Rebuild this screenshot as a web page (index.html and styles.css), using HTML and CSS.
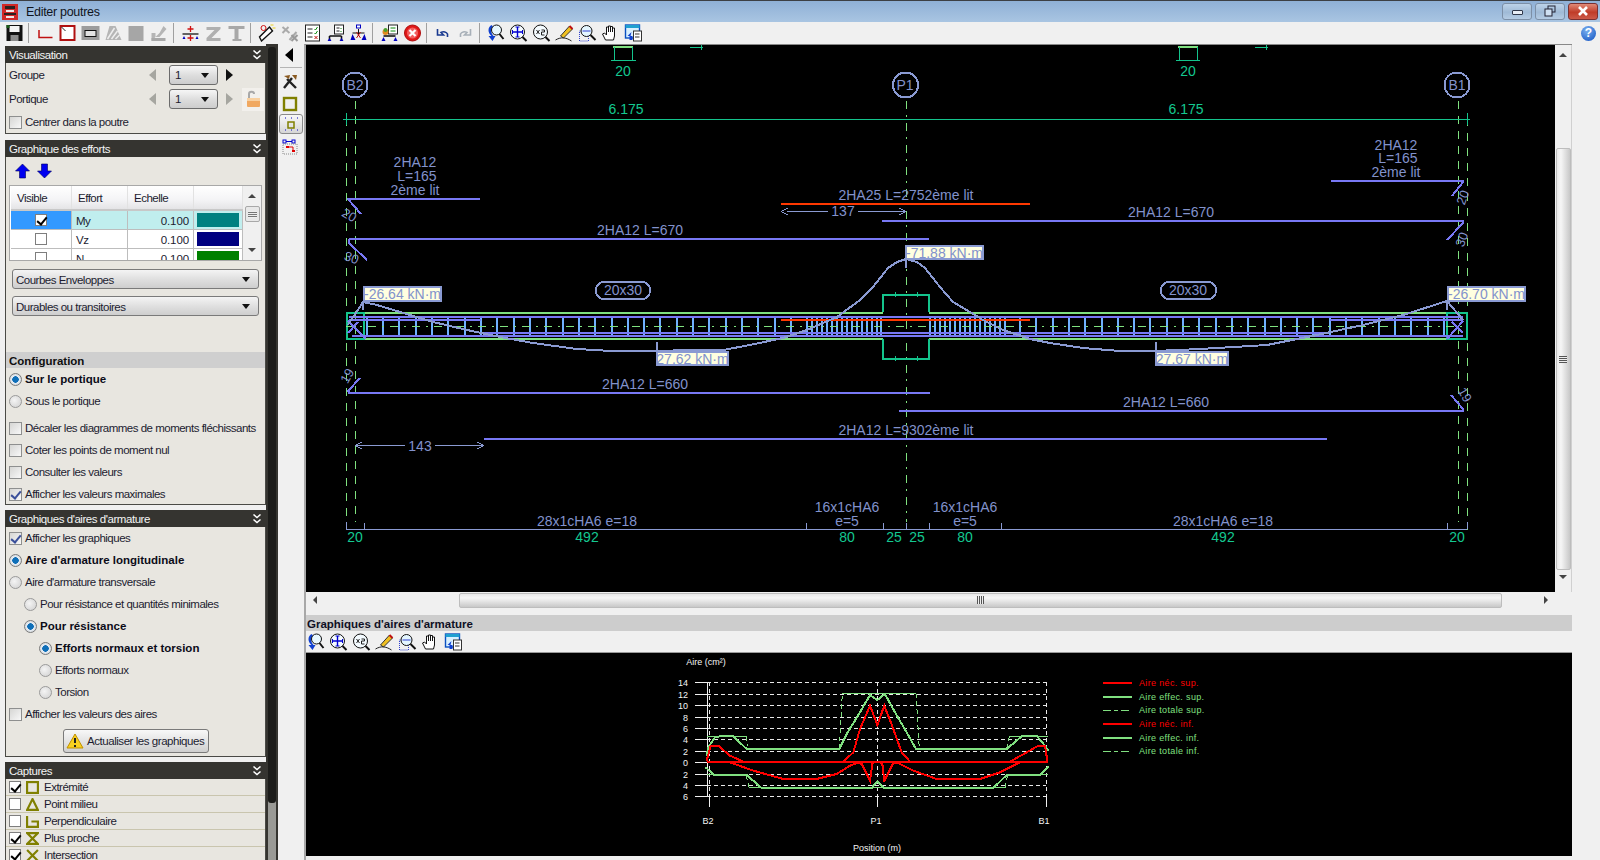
FILE: index.html
```html
<!DOCTYPE html>
<html lang="fr">
<head>
<meta charset="utf-8">
<title>Editer poutres</title>
<link rel="stylesheet" href="styles.css">
</head>
<body>
<svg class="defs" width="0" height="0" aria-hidden="true">
  <symbol id="i-save" viewBox="0 0 18 18"><rect x="1" y="1" width="16" height="16" fill="#111"/><rect x="4" y="2" width="10" height="6" fill="#f4f4f4"/><rect x="5" y="11" width="8" height="6" fill="#8a8a8a"/><rect x="1" y="1" width="3" height="3" fill="#1a5c1a"/></symbol>
  <symbol id="i-l" viewBox="0 0 18 18"><path d="M3.5 6V13.5H17" fill="none" stroke="#c01010" stroke-width="1.5"/></symbol>
  <symbol id="i-box" viewBox="0 0 18 18"><rect x="2" y="2" width="14" height="14" fill="#fff" stroke="#b01010" stroke-width="2"/><path d="M3 3L7 7" stroke="#222"/></symbol>
  <symbol id="i-rect" viewBox="0 0 18 18"><rect x="0" y="2" width="18" height="14" fill="#9c9c9c"/><rect x="3.5" y="6.5" width="11" height="6" fill="#e2e2e2" stroke="#111"/></symbol>
  <symbol id="i-hatch" viewBox="0 0 18 18"><path d="M1 16L5 2H11L17 16Z" fill="#b5b5b5"/><path d="M3 15L10 4M7 15L13 7M11 15L15 11" stroke="#eee" stroke-width="1.5"/></symbol>
  <symbol id="i-sq" viewBox="0 0 18 18"><rect x="1" y="2" width="15" height="15" fill="#a6a6a6"/></symbol>
  <symbol id="i-hat" viewBox="0 0 18 18"><path d="M1 17V9H5V13H9L16 5L13 2L9 9" fill="#b5b5b5"/><rect x="1" y="14" width="14" height="3" fill="#a8a8a8"/></symbol>
  <symbol id="i-beam" viewBox="0 0 18 18"><path d="M1 10H17" stroke="#333" stroke-width="1.5"/><path d="M1 15H4L2.5 12ZM14 15H17L15.500 12Z" fill="#0000c0"/><path d="M9 2V8M6 5H12M9 11V17M6 14H12" stroke="#d01010" stroke-width="1.3"/></symbol>
  <symbol id="i-z" viewBox="0 0 18 18"><path d="M2 3H16V5L7 14H16V17H2V14L10 6H2Z" fill="#b0b0b0"/></symbol>
  <symbol id="i-t" viewBox="0 0 18 18"><path d="M1 2H17V5H11V15H14V17H5V15H7V5H1Z" fill="#a8a8a8"/></symbol>
  <symbol id="i-wand" viewBox="0 0 18 18"><path d="M4 17L2 13L12 3L15 7Z" fill="#fff" stroke="#111" stroke-width="1.4"/><circle cx="6" cy="4" r="2.500" fill="none" stroke="#d01010"/><path d="M13 1H16M15 4H18" stroke="#e8d020"/></symbol>
  <symbol id="i-x" viewBox="0 0 18 18"><path d="M2 3L9 9M8 3L2 9M9 16L16 8" stroke="#aaa" stroke-width="2"/><path d="M11 11L17 17M17 11L11 17" stroke="#9a9a9a" stroke-width="2"/></symbol>
  <symbol id="i-list" viewBox="0 0 18 18"><rect x="2" y="1" width="14" height="16" fill="#fff" stroke="#222"/><path d="M4 5H9M4 9H9M4 13H9" stroke="#222"/><path d="M11 5L12 6L14 3M11 9L12 10L14 7" fill="none" stroke="#0a8a0a"/><path d="M11 12L14 15M14 12L11 15" stroke="#c01010"/></symbol>
  <symbol id="i-table" viewBox="0 0 18 18"><rect x="8" y="1" width="9" height="9" fill="#fff" stroke="#222"/><path d="M10 4H13M10 7H13" stroke="#222"/><path d="M14 4L15 5M14 7L15 8" stroke="#0a8a0a"/><path d="M3 12H15M3 12V16M15 12V16" stroke="#111" stroke-width="1.600"/><path d="M1 17H5L3 14ZM13 17H17L15 14Z" fill="#0000c0"/></symbol>
  <symbol id="i-node" viewBox="0 0 18 18"><path d="M3 9H15M9 5V12" stroke="#111"/><path d="M1 16H6L3 10ZM12 16H17L15 10Z" fill="#0000c0"/><rect x="7" y="1" width="4" height="3" fill="#fff" stroke="#0000c0"/><path d="M7 8L11 14M11 8L7 14" stroke="#c01010"/></symbol>
  <symbol id="i-shop" viewBox="0 0 18 18"><rect x="8" y="1" width="9" height="9" fill="#fff" stroke="#222"/><path d="M10 4H15M10 7H15" stroke="#0a8a0a"/><path d="M3 12H15" stroke="#111" stroke-width="1.600"/><path d="M1 17H5L3 13ZM13 17H17L15 13Z" fill="#0000c0"/><circle cx="5" cy="8" r="3" fill="#e08a20"/><circle cx="5" cy="6" r="2" fill="#4aa030"/></symbol>
  <symbol id="i-stop" viewBox="0 0 18 18"><circle cx="9" cy="9" r="8" fill="#e01818" stroke="#b01010"/><circle cx="9" cy="9" r="5.500" fill="#f26060"/><path d="M6 6L12 12M12 6L6 12" stroke="#fff" stroke-width="2.200"/></symbol>
  <symbol id="i-undo" viewBox="0 0 18 18"><path d="M4 5V11H10L7.500 8.500C10 7 13 8 14 10L14 13" fill="none" stroke="#1a3a90" stroke-width="1.600"/></symbol>
  <symbol id="i-redo" viewBox="0 0 18 18"><path d="M14 5V11H8L10.500 8.500C8 7 5 8 4 10L4 13" fill="none" stroke="#a8b0b8" stroke-width="1.600"/></symbol>
  <symbol id="i-zr" viewBox="0 0 18 18"><path d="M5 1C1 3 1 9 5 12L2 12L6 17L9 12H7C4 9 4 5 7 3" fill="#1040d0"/><circle cx="10" cy="6" r="5" fill="#e8f8ff" stroke="#111"/><path d="M13 10L17 15" stroke="#111" stroke-width="2"/></symbol>
  <symbol id="i-zf" viewBox="0 0 18 18"><circle cx="8" cy="8" r="7" fill="#f4fbff" stroke="#111"/><path d="M8 3V13M3 8H13" stroke="#0000d0" stroke-width="1.400"/><path d="M6 3H10M6 13H10M3 6V10M13 6V10" stroke="#0000d0"/><path d="M13 13L17 17" stroke="#111" stroke-width="2"/></symbol>
  <symbol id="i-z2" viewBox="0 0 18 18"><circle cx="8" cy="8" r="7" fill="#f4fbff" stroke="#111"/><path d="M4 6L7 10M7 6L4 10" stroke="#222"/><path d="M9 6H12V8H9V11H12" fill="none" stroke="#222"/><path d="M13 13L17 17" stroke="#111" stroke-width="2"/></symbol>
  <symbol id="i-pen" viewBox="0 0 18 18"><path d="M5 12L14 2L17 5L8 14Z" fill="#f0c020" stroke="#333"/><path d="M14 2L17 5" stroke="#c01010" stroke-width="2"/><path d="M0 16C5 13 10 13 16 17" fill="none" stroke="#222"/></symbol>
  <symbol id="i-zw" viewBox="0 0 18 18"><rect x="1" y="7" width="9" height="10" fill="none" stroke="#3040d0" stroke-dasharray="1 1"/><circle cx="8" cy="7" r="5.500" fill="#e4f6ff" stroke="#111"/><path d="M4 7H12" stroke="#3040d0"/><path d="M12 11L17 16" stroke="#111" stroke-width="2"/></symbol>
  <symbol id="i-hand" viewBox="0 0 18 18"><path d="M4 16L1 10L3 9L5 11V3H7V8V2H9V8V2.500H11V8V4H13V12L12 16Z" fill="#fff" stroke="#111"/></symbol>
  <symbol id="i-doc" viewBox="0 0 18 18"><rect x="1" y="1" width="14" height="13" fill="#d8f0ff" stroke="#0a50c0" stroke-width="1.400"/><rect x="1" y="1" width="14" height="3" fill="#20a0d0"/><rect x="9" y="7" width="8" height="10" fill="#fff" stroke="#333"/><path d="M10.500 10H15M10.500 13H15" stroke="#333"/><path d="M7 8L3 12H5V16H8V12H6" fill="#1040d0"/></symbol>
  <symbol id="i-chev" viewBox="0 0 10 10"><path d="M1.500 0.500L5 3.500L8.500 0.500M1.500 5.500L5 8.500L8.500 5.500" fill="none" stroke="#fff" stroke-width="1.500"/></symbol>
</svg>

<div class="app">
  <header class="titlebar">
    <svg class="appicon" viewBox="0 0 16 16"><rect width="16" height="16" fill="#d02828"/><path d="M3 2H13V5H3ZM2 9H14V11H2Z" fill="#2a2020"/><path d="M4 6H12V8H4ZM4 12H12V14H4Z" fill="#f0e8e8"/></svg>
    <span class="titletext">Editer poutres</span>
    <div class="winbtns">
      <span class="winbtn"><span class="wmin"></span></span>
      <span class="winbtn"><svg class="wrest" viewBox="0 0 12 12"><rect x="4" y="1" width="7" height="6" fill="none" stroke="#223"/><rect x="1" y="4" width="7" height="7" fill="#cfe0f2" stroke="#223"/></svg></span>
      <span class="winbtn wclose"><svg class="wrest" viewBox="0 0 12 12"><path d="M2 2L10 10M10 2L2 10" stroke="#fff" stroke-width="2.600"/></svg></span>
    </div>
  </header>

  <nav class="toolbar">
    <svg class="tb"><use href="#i-save"/></svg><i class="sep"></i>
    <svg class="tb"><use href="#i-l"/></svg><svg class="tb"><use href="#i-box"/></svg><svg class="tb"><use href="#i-rect"/></svg><svg class="tb"><use href="#i-hatch"/></svg><svg class="tb"><use href="#i-sq"/></svg><svg class="tb"><use href="#i-hat"/></svg><i class="sep"></i>
    <svg class="tb"><use href="#i-beam"/></svg><svg class="tb"><use href="#i-z"/></svg><svg class="tb"><use href="#i-t"/></svg><i class="sep"></i>
    <svg class="tb"><use href="#i-wand"/></svg><svg class="tb"><use href="#i-x"/></svg><svg class="tb"><use href="#i-list"/></svg><svg class="tb"><use href="#i-table"/></svg><svg class="tb"><use href="#i-node"/></svg><i class="sep"></i>
    <svg class="tb"><use href="#i-shop"/></svg><svg class="tb"><use href="#i-stop"/></svg><i class="sep"></i>
    <svg class="tb"><use href="#i-undo"/></svg><svg class="tb"><use href="#i-redo"/></svg><i class="sep"></i>
    <svg class="tb"><use href="#i-zr"/></svg><svg class="tb"><use href="#i-zf"/></svg><svg class="tb"><use href="#i-z2"/></svg><svg class="tb"><use href="#i-pen"/></svg><svg class="tb"><use href="#i-zw"/></svg><svg class="tb"><use href="#i-hand"/></svg><svg class="tb"><use href="#i-doc"/></svg>
  </nav>

  <div class="main">
    <aside class="side">
      <section class="panel">
        <h2 class="phead">Visualisation<svg class="chev"><use href="#i-chev"/></svg></h2>
        <div class="pbody p1">
          <div class="vrow"><span>Groupe</span><i class="arr-l"></i><span class="select">1</span><i class="arr-r"></i></div>
          <div class="vrow"><span>Portique</span><i class="arr-l"></i><span class="select">1</span><i class="arr-r off"></i>
            <span class="lock"><svg viewBox="0 0 18 18" width="18" height="18"><path d="M5 8V4C5 1 10 1 10 4" fill="none" stroke="#a8a8a8" stroke-width="2"/><rect x="3" y="8" width="13" height="9" rx="1" fill="#f0a860"/><rect x="3" y="8" width="13" height="3" fill="#f8d0a0"/></svg></span></div>
          <div class="opt"><i class="cb"></i>Centrer dans la poutre</div>
        </div>
      </section>

      <section class="panel">
        <h2 class="phead">Graphique des efforts<svg class="chev"><use href="#i-chev"/></svg></h2>
        <div class="pbody p2">
          <div class="updown">
            <svg viewBox="0 0 14 16" width="15" height="16"><path d="M7 1L14 8H10V15H4V8H0Z" fill="#0000f0" stroke="#000060" stroke-width=".6"/></svg>
            <svg viewBox="0 0 14 16" width="15" height="16"><path d="M7 15L14 8H10V1H4V8H0Z" fill="#0000f0" stroke="#000060" stroke-width=".6"/></svg>
          </div>
          <div class="grid">
            <div class="gridmain">
              <div class="gr ghead"><span>Visible</span><span>Effort</span><span>Echelle</span><span></span></div>
              <div class="gr gsel"><span class="cvis"><i class="cbw on"></i></span><span>My</span><span class="num">0.100</span><span class="cswatch"><i class="sw s-teal"></i></span></div>
              <div class="gr"><span class="cvis"><i class="cbw"></i></span><span>Vz</span><span class="num">0.100</span><span class="cswatch"><i class="sw s-navy"></i></span></div>
              <div class="gr"><span class="cvis"><i class="cbw"></i></span><span>N</span><span class="num">0.100</span><span class="cswatch"><i class="sw s-green"></i></span></div>
            </div>
            <div class="gridscroll"><i class="up"></i><i class="gthumb"></i><i class="down"></i></div>
          </div>
          <div class="combo">Courbes Enveloppes</div>
          <div class="combo">Durables ou transitoires</div>
          <h3 class="cfg">Configuration</h3>
          <div class="opt"><i class="rb on"></i><b>Sur le portique</b></div>
          <div class="opt"><i class="rb"></i>Sous le portique</div>
          <div class="opt gaptop"><i class="cb"></i>Décaler les diagrammes de moments fléchissants</div>
          <div class="opt"><i class="cb"></i>Coter les points de moment nul</div>
          <div class="opt"><i class="cb"></i>Consulter les valeurs</div>
          <div class="opt"><i class="cb on"></i>Afficher les valeurs maximales</div>
        </div>
      </section>

      <section class="panel">
        <h2 class="phead">Graphiques d'aires d'armature<svg class="chev"><use href="#i-chev"/></svg></h2>
        <div class="pbody p3">
          <div class="opt"><i class="cb on"></i>Afficher les graphiques</div>
          <div class="opt"><i class="rb on"></i><b>Aire d'armature longitudinale</b></div>
          <div class="opt"><i class="rb"></i>Aire d'armature transversale</div>
          <div class="opt in1"><i class="rb"></i>Pour résistance et quantités minimales</div>
          <div class="opt in1"><i class="rb on"></i><b>Pour résistance</b></div>
          <div class="opt in2"><i class="rb on"></i><b>Efforts normaux et torsion</b></div>
          <div class="opt in2"><i class="rb"></i>Efforts normaux</div>
          <div class="opt in2"><i class="rb"></i>Torsion</div>
          <div class="opt"><i class="cb"></i>Afficher les valeurs des aires</div>
          <button class="action"><svg viewBox="0 0 18 16" width="18" height="16"><path d="M9 1L17 15H1Z" fill="#f8d020" stroke="#c09000"/><path d="M9 5V10M9 12V14" stroke="#222" stroke-width="2"/></svg>Actualiser les graphiques</button>
        </div>
      </section>

      <section class="panel captures">
        <h2 class="phead">Captures<svg class="chev"><use href="#i-chev"/></svg></h2>
        <div class="pbody p4">
          <div class="cap"><i class="cbw on"></i><svg class="capi" viewBox="0 0 12 12"><rect x="1" y="1" width="10" height="10"/></svg>Extrémité</div>
          <div class="cap"><i class="cbw"></i><svg class="capi" viewBox="0 0 12 12"><path d="M6 1L11 11H1Z"/></svg>Point milieu</div>
          <div class="cap"><i class="cbw"></i><svg class="capi" viewBox="0 0 12 12"><path d="M1 1V11H11V6H5"/></svg>Perpendiculaire</div>
          <div class="cap"><i class="cbw on"></i><svg class="capi" viewBox="0 0 12 12"><path d="M1 1H11L1 11H11Z"/></svg>Plus proche</div>
          <div class="cap"><i class="cbw on"></i><svg class="capi" viewBox="0 0 12 12"><path d="M1 1L11 11M11 1L1 11"/></svg>Intersection</div>
        </div>
      </section>
    </aside>

    <div class="siderail"><i class="railthumb"></i></div>

    <div class="strip">
      <i class="stripcollapse"></i>
      <i class="stripsep"></i>
      <svg class="si" viewBox="0 0 18 18"><path d="M3 15L11 5M15 15L6 6" stroke="#222" stroke-width="2.400"/><path d="M3 3L9 2L8 6ZM11 2H16L15 7Z" fill="#8a5a20"/></svg>
      <svg class="si" viewBox="0 0 18 18"><rect x="3" y="3" width="12" height="12" fill="none" stroke="#808000" stroke-width="2.400"/></svg>
      <span class="sisel"><svg viewBox="0 0 18 18" width="18" height="18"><path d="M3 3H4M9 3H10M15 3H16M3 15H4M15 15H16M9 15H10" stroke="#0000c0"/><rect x="6" y="7" width="6" height="6" fill="none" stroke="#808000" stroke-width="1.500"/></svg></span>
      <svg class="si" viewBox="0 0 18 18"><rect x="2" y="2" width="3" height="3" fill="none" stroke="#0000d0"/><path d="M5 3.500H11" stroke="#0000d0"/><rect x="11" y="2" width="3" height="3" fill="none" stroke="#0000d0"/><rect x="2" y="6" width="14" height="10" fill="none" stroke="#888" stroke-dasharray="1 1"/><rect x="5" y="8" width="3" height="2" fill="#e00000"/><rect x="11" y="12" width="3" height="2" fill="#e00000"/><path d="M8 9H12V12" fill="none" stroke="#e00000"/></svg>
    </div>

    <div class="center">
      <div class="viewrow">
        <svg class="canvas" width="1249" height="547" viewBox="306 45 1249 547">
          <!-- axes -->
          <path class="axis" d="M355 101V522M1458 101V522"/>
          <path class="axis" d="M346.500 118V530M1467.500 118V530"/>
          <path class="axis2" d="M906 101V522"/>
          <!-- top dimensions -->
          <path class="barg" d="M613 46.500H633M1178 46.500H1198"/>
          <path class="teal" d="M614.500 47V60M632.500 47V60M611 60.500H636M1179.500 47V60M1197.500 47V60M1176 60.500H1200M690 47.500H703M701.500 45V50M1255 47.500H1268M1266.500 45V50"/>
          <text class="dim" x="623" y="76">20</text><text class="dim" x="1188" y="76">20</text>
          <path class="teal" d="M343 119.500H1470M346.500 113V125M1467.500 113V125"/>
          <text class="dim" x="626" y="114">6.175</text><text class="dim" x="1186" y="114">6.175</text>
          <!-- circles -->
          <circle class="bub" cx="355" cy="85" r="12.500"/><circle class="bub" cx="905.500" cy="85" r="12.500"/><circle class="bub" cx="1457" cy="85" r="12.500"/>
          <text class="lbl" x="355" y="90">B2</text><text class="lbl" x="905" y="90">P1</text><text class="lbl" x="1457" y="90">B1</text>
          <!-- top rebars -->
          <text class="lbl" x="415" y="167">2HA12</text><text class="lbl" x="417" y="181">L=165</text><text class="lbl" x="415" y="195">2ème lit</text>
          <path class="rebar" d="M361 214L348 199L349 198.500H480"/>
          <text class="lbl" x="640" y="235">2HA12 L=670</text>
          <path class="rebar" d="M367 260L349 243V240L351 238.500H929"/>
          <text class="lbl" x="906" y="200">2HA25 L=2752ème lit</text>
          <path class="redbar" d="M781 203.500H1030"/>
          <path class="thin" d="M787 211.500H828M858 211.500H905M781 211.500L788 208M781 211.500L788 215M906 211.500L899 208M906 211.500L899 215"/>
          <text class="lbl" x="843" y="216">137</text>
          <path class="rebar" d="M882 220.500H1463V223L1447 240"/>
          <text class="lbl" x="1171" y="217">2HA12 L=670</text>
          <text class="lbl" x="1396" y="150">2HA12</text><text class="lbl" x="1398" y="163">L=165</text><text class="lbl" x="1396" y="177">2ème lit</text>
          <path class="rebar" d="M1331 180.500H1463V182L1452 196"/>
          <text class="sm" transform="translate(347 219) rotate(30)">20</text><text class="sm" transform="translate(350 262) rotate(20)">30</text>
          <text class="sm" transform="translate(1467 199) rotate(-70)">20</text><text class="sm" transform="translate(1466 241) rotate(-70)">30</text>
          <text class="sm" transform="translate(351 378) rotate(-60)">19</text><text class="sm" transform="translate(1461 397) rotate(60)">19</text>
          <!-- beam -->
          <path class="greenl" d="M346 312.500H883M929 312.500H1467M346 339H883M929 339H1467"/>
          <path class="teal2" d="M883 312V294.500H929V312M883 339V358.500H929V339"/>
          <path class="teal" d="M895 292V297M917 292V297M895 356V361M917 356V361"/>
          <rect class="tealbox" x="347" y="312.500" width="17" height="26"/><rect class="tealbox" x="1447" y="312.500" width="20" height="26"/>
          <path class="stirrups" d="M367 316v19M383 316v19M399 316v19M416 316v19M432 316v19M448 316v19M465 316v19M481 316v19M497 316v19M514 316v19M530 316v19M546 316v19M563 316v19M579 316v19M595 316v19M612 316v19M628 316v19M644 316v19M660 316v19M677 316v19M693 316v19M709 316v19M726 316v19M742 316v19M758 316v19M775 316v19M791 316v19M807 316v19M812 316v19M817 316v19M822 316v19M827 316v19M832 316v19M837 316v19M842 316v19M847 316v19M852 316v19M857 316v19M862 316v19M867 316v19M872 316v19M877 316v19M881 316v19M930 316v19M935 316v19M940 316v19M945 316v19M950 316v19M955 316v19M960 316v19M965 316v19M970 316v19M975 316v19M980 316v19M985 316v19M990 316v19M995 316v19M1000 316v19M1005 316v19M1020 316v19M1036 316v19M1053 316v19M1069 316v19M1085 316v19M1102 316v19M1118 316v19M1134 316v19M1150 316v19M1167 316v19M1183 316v19M1199 316v19M1216 316v19M1232 316v19M1248 316v19M1265 316v19M1281 316v19M1297 316v19M1313 316v19M1330 316v19M1346 316v19M1362 316v19M1379 316v19M1395 316v19M1411 316v19M1428 316v19M1444 316v19"/>
          <path class="beamaxis" d="M346 326.500H1467"/>
          <path class="rebar" d="M349 316.500H1463M349 319.500H481M1330 319.500H1463M484 332.500H929M884 332.500H1327M352 335.500H1463"/>
          <path class="redbar" d="M781 319.500H1030"/>
          <path class="rebar" d="M348 321L366 339M348 333L358 322M1463 321L1447 339M1463 333L1452 322"/>
          <!-- moment curve -->
          <polyline class="curve" points="348,325 363,302 377,305 400,312 433,322 467,330 500,337 533,343 577,349 612,351 657,351 690,350 723,350 750,345 783,338 807,330 837,317 860,300 873,287 888,268 897,262 906,259 917,262 925,268 940,287 953,302 970,312 983,320 1003,330 1030,339 1050,343 1083,348 1120,351 1155,351 1200,349 1267,345 1317,335 1363,325 1403,315 1447,301 1463,320"/>
          <path class="curve" d="M363 301V310M1447 301V310M906 247V268M656.500 342V351M1155.500 342V351"/>
          <rect class="tip" x="364" y="287" width="77" height="14"/><text class="lbl tipt" x="402.500" y="299">-26.64 kN·m</text>
          <rect class="tip" x="906" y="246" width="77" height="13"/><text class="lbl tipt" x="944.500" y="257.500">-71.88 kN·m</text>
          <rect class="tip" x="1448" y="287" width="77" height="14"/><text class="lbl tipt" x="1486.500" y="299">-26.70 kN·m</text>
          <rect class="tip" x="657" y="352" width="71" height="13"/><text class="lbl tipt" x="692.500" y="363.500">27.62 kN·m</text>
          <rect class="tip" x="1156" y="352" width="72" height="13"/><text class="lbl tipt" x="1192" y="363.500">27.67 kN·m</text>
          <rect class="pill" x="596" y="282" width="54" height="17" rx="8"/><text class="lbl" x="623" y="295">20x30</text>
          <rect class="pill" x="1161" y="282" width="55" height="17" rx="8"/><text class="lbl" x="1188" y="295">20x30</text>
          <!-- bottom rebars -->
          <text class="lbl" x="645" y="389">2HA12 L=660</text>
          <path class="rebar" d="M360 378L348 391L349 392.500H930"/>
          <text class="lbl" x="1166" y="407">2HA12 L=660</text>
          <path class="rebar" d="M899 410.500H1463V409L1451 395"/>
          <text class="lbl" x="906" y="435">2HA12 L=9302ème lit</text>
          <path class="rebar" d="M484 438.500H1327"/>
          <path class="thin" d="M355 445.500H405M435 445.500H484M355 445.500L362 442M355 445.500L362 449M484 445.500L477 442M484 445.500L477 449"/>
          <text class="lbl" x="420" y="451">143</text>
          <!-- bottom dims -->
          <path class="thin" d="M346 529.500H1467M346.500 522V529M364.500 523V529M806.500 523V529M883.500 523V529M906.500 523V529M929.500 523V529M1001.500 523V529M1447.500 523V529M1467.500 522V529"/>
          <text class="lbl" x="587" y="526">28x1cHA6 e=18</text><text class="lbl" x="1223" y="526">28x1cHA6 e=18</text>
          <text class="lbl" x="847" y="512">16x1cHA6</text><text class="lbl" x="847" y="526">e=5</text>
          <text class="lbl" x="965" y="512">16x1cHA6</text><text class="lbl" x="965" y="526">e=5</text>
          <text class="dim" x="355" y="542">20</text><text class="dim" x="587" y="542">492</text><text class="dim" x="847" y="542">80</text><text class="dim" x="894" y="542">25</text><text class="dim" x="917" y="542">25</text><text class="dim" x="965" y="542">80</text><text class="dim" x="1223" y="542">492</text><text class="dim" x="1457" y="542">20</text>
        </svg>
        <div class="vscroll"><i class="up"></i><i class="vthumb"><i class="grip"></i></i><i class="down"></i></div>
      </div>
      <div class="hscroll"><i class="left"></i><i class="hthumb"><i class="grip v"></i></i><i class="right"></i></div>
      <h3 class="sectitle">Graphiques d'aires d'armature</h3>
      <div class="minitb">
        <svg class="tb"><use href="#i-zr"/></svg><svg class="tb"><use href="#i-zf"/></svg><svg class="tb"><use href="#i-z2"/></svg><svg class="tb"><use href="#i-pen"/></svg><svg class="tb"><use href="#i-zw"/></svg><svg class="tb"><use href="#i-hand"/></svg><svg class="tb"><use href="#i-doc"/></svg>
      </div>
      <svg class="chart" width="1266" height="203" viewBox="306 654 1266 203">
        <text class="ct" x="706" y="666">Aire (cm²)</text>
        <path class="grid-d" d="M707 683.500H1046M707 695.500H1046M707 706.500H1046M707 718.500H1046M707 729.500H1046M707 740.500H1046M707 752.500H1046M707 775.500H1046M707 786.500H1046M707 797.500H1046"/>
        <path class="grid-d" d="M709.500 683V797M877.500 683V797M1046.500 683V797"/>
        <path class="grid-s" d="M695 683.500H707M695 695.500H707M695 706.500H707M695 718.500H707M695 729.500H707M695 740.500H707M695 752.500H707M695 763.500H707M695 775.500H707M695 786.500H707M695 797.500H707M707 683V797M709.500 797V808M877.500 797V808M1046.500 797V808"/>
        <g class="ticks">
          <text x="688" y="687">14</text><text x="688" y="699">12</text><text x="688" y="710">10</text><text x="688" y="722">8</text><text x="688" y="733">6</text><text x="688" y="744">4</text><text x="688" y="756">2</text><text x="688" y="767">0</text><text x="688" y="779">2</text><text x="688" y="790">4</text><text x="688" y="801">6</text>
        </g>
        <text class="ct" x="708" y="825">B2</text><text class="ct" x="876" y="825">P1</text><text class="ct" x="1044" y="825">B1</text>
        <text class="ct" x="877" y="852">Position (m)</text>
        <g transform="translate(640 650) scale(.33333)">
          <polyline class="c-tot" points="200,262 318,262"/>
          <polyline class="c-tot dashed" points="318,262 322,290"/>
          <polyline class="c-tot dashed" points="598,300 607,133"/>
          <polyline class="c-tot" points="607,133 828,133"/>
          <polyline class="c-tot dashed" points="828,133 838,300"/>
          <polyline class="c-tot dashed" points="1100,300 1108,262"/>
          <polyline class="c-tot" points="1108,262 1225,262"/>
          <polyline class="c-tot" points="200,378 318,378"/>
          <polyline class="c-tot dashed" points="318,378 328,417"/>
          <polyline class="c-tot" points="328,417 1095,417"/>
          <polyline class="c-tot dashed" points="1095,417 1103,378"/>
          <polyline class="c-tot" points="1103,378 1225,378"/>
          <polyline class="c-eff" points="200,320 205,295 225,265 250,260 280,262 320,300 598,300 620,255 660,190 690,138 712,153 735,135 765,190 800,250 828,300 1100,300 1145,262 1190,260 1215,290 1225,305"/>
          <polyline class="c-eff" points="197,355 222,378 320,378 365,417 695,417 712,397 732,417 1060,417 1100,378 1200,378 1225,352"/>
          <polyline class="c-nec" points="200,340 1225,340"/>
          <polyline class="c-nec" points="200,335 212,290 235,290 270,320 310,338 610,338 640,310 660,240 690,170 712,228 733,170 760,240 785,310 810,338 1110,338 1160,310 1195,290 1215,290 1222,335"/>
          <polyline class="c-nec" points="270,340 340,365 430,390 530,390 590,375 630,350 655,340 665,345 690,395 697,345 705,338 720,338 727,345 733,395 760,342 775,342 820,365 890,390 1020,390 1080,370 1140,340"/>
        </g>
        <path class="l-red" d="M1103 684H1132M1103 725H1132"/>
        <path class="l-green" d="M1103 698H1132M1103 739H1132"/>
        <path class="l-dash" d="M1103 711.500H1132M1103 752.500H1132"/>
        <text class="lg red" x="1139" y="687">Aire néc. sup.</text>
        <text class="lg" x="1139" y="701">Aire effec. sup.</text>
        <text class="lg" x="1139" y="714">Aire totale sup.</text>
        <text class="lg red" x="1139" y="728">Aire néc. inf.</text>
        <text class="lg" x="1139" y="742">Aire effec. inf.</text>
        <text class="lg" x="1139" y="755">Aire totale inf.</text>
      </svg>
    </div>

    <div class="rightm"><span class="help">?</span></div>
  </div>
</div>
</body>
</html>
```

FILE: styles.css
```css
* { box-sizing: border-box; }
html, body { margin: 0; padding: 0; background: #f0f0f0; }
body { font-family: "Liberation Sans", Arial, sans-serif; font-size: 11.5px; color: #1c1c30; letter-spacing: -.5px; }
.defs { position: absolute; }
i { display: block; }

.app { width: 1600px; height: 860px; display: flex; flex-direction: column; overflow: hidden; }

/* title bar */
.titlebar { height: 22px; flex: none; border-top: 1px solid #3c3f44; display: flex; align-items: center; background: linear-gradient(#8fb0d6, #a9c5e2); }
.appicon { width: 16px; height: 16px; margin-left: 2px; }
.titletext { margin-left: 8px; font-size: 12.5px; letter-spacing: -.3px; color: #10141c; }
.winbtns { margin-left: auto; display: flex; gap: 3px; margin-right: 2px; margin-top: -1px; }
.winbtn { width: 30px; height: 17px; border: 1px solid #7c8fa6; border-radius: 3px; background: linear-gradient(#bcd2e8, #9fbad6 55%, #b5cce4); display: flex; align-items: center; justify-content: center; }
.wmin { width: 11px; height: 5px; border: 1px solid #30384a; background: #e8eef6; border-radius: 1px; margin-top: 3px; }
.wrest { width: 12px; height: 12px; }
.wclose { background: linear-gradient(#e08a78, #c03c28 55%, #cc5a48); border-color: #7a3030; }

/* toolbar */
.toolbar { height: 22px; flex: none; display: flex; align-items: center; padding-left: 3px; background: #f0f0f0; }
.tb { width: 23px; height: 18px; flex: none; }
.sep { width: 1px; height: 20px; background: #a0a0a0; margin: 0 4.4px 0 2px; flex: none; }

.main { flex: 1; display: flex; min-height: 0; }

/* side panels */
.side { width: 266px; flex: none; padding: 2px 0 0 5px; overflow: hidden; background: #f0f0f0; }
.panel { width: 261px; margin-bottom: 5px; }
.panel:first-child { margin-bottom: 6px; }
.phead { margin: 0; height: 17px; background: #353430; color: #f4f4f4; font-size: 11.5px; font-weight: 400; padding: 1px 0 0 4px; display: flex; align-items: center; justify-content: space-between; letter-spacing: -.45px; }
.chev { width: 10px; height: 10px; margin-right: 4px; }
.pbody { background: #e8e6e0; border: 1px solid #4a4a46; border-top: 0; }
.p1 { height: 71px; }
.p2 { height: 348px; }
.p3 { height: 230px; }
.p4 { height: 90px; border-bottom: 0; }

.vrow { height: 24px; display: grid; grid-template-columns: 135px 25px 49px 24px 22px; align-items: center; padding-left: 3px; }
.arr-l { width: 0; height: 0; margin-left: 5px; border: 6px solid transparent; border-left-width: 0; border-right: 7px solid #a6a6a0; }
.arr-r { width: 0; height: 0; margin-left: 8px; border: 6px solid transparent; border-right-width: 0; border-left: 7px solid #111; }
.arr-r.off { border-left-color: #a6a6a0; }
.select { height: 20px; line-height: 18px; padding-left: 5px; border: 1px solid #6c6c6c; border-radius: 3px; background: linear-gradient(#f6f6f6, #dcdcdc 55%, #cdcdcd); position: relative; }
.select::after, .combo::after { content: ""; position: absolute; right: 8px; top: 7px; border: 4px solid transparent; border-top: 5px solid #111; border-bottom: 0; }
.lock { height: 23px; background: #f2f0ec; display: flex; align-items: center; justify-content: center; }

.opt { height: 22px; display: flex; align-items: center; padding-left: 3px; white-space: nowrap; }
.opt.gaptop { margin-top: 5px; }
.opt.in1 { padding-left: 18px; }
.opt.in2 { padding-left: 33px; }
.opt b { letter-spacing: 0; color: #0c0c18; }
.cb { width: 13px; height: 13px; margin-right: 3px; border: 1px solid #8e8f8f; background: linear-gradient(135deg, #d6d6d4, #f8f8f8); flex: none; position: relative; }
.cb.on::after { content: ""; position: absolute; left: 3px; top: 0; width: 4px; height: 8px; border: solid #3a4f9a; border-width: 0 2px 2px 0; transform: rotate(40deg); }
.rb { width: 13px; height: 13px; margin: 0 3px 0 0; border-radius: 50%; border: 1px solid #9a9a9a; background: radial-gradient(circle at 40% 40%, #f4f4f4, #cfcfcf); flex: none; }
.rb.on { background: radial-gradient(circle, #0f6fb8 0 3px, #e8eef4 3.5px, #c4c8cc); border-color: #7a7a7a; }

.updown { height: 28px; display: flex; align-items: center; gap: 7px; padding-left: 9px; }
.grid { margin-left: 3px; width: 253px; height: 76px; border: 1px solid #a8a8a8; background: #fff; display: flex; overflow: hidden; }
.gridmain { width: 233px; padding-left: 1px; }
.gr { display: grid; grid-template-columns: 61px 56px 66px 49px; height: 19px; border-bottom: 1px solid #bdbdbd; align-items: center; }
.gr > span { height: 100%; display: flex; align-items: center; padding: 1px 0 0 4px; border-right: 1px solid #bdbdbd; }
.ghead { height: 25px; background: linear-gradient(#fff, #f4f4f6 60%, #e4e4e6); border-bottom: 2px solid #c8c8c8; }
.ghead > span { padding-left: 6px; border-right: 1px solid #e2e2e2; }
.gsel > span { background: #c0eeee; }
.gr .cvis { justify-content: center; padding: 0; }
.gsel .cvis { background: #3399ff; }
.gr .num { justify-content: flex-end; padding: 1px 4px 0 0; letter-spacing: -.1px; }
.gr .cswatch { padding: 2px 3px; }
.sw { width: 100%; height: 100%; }
.s-teal { background: #008080; }
.s-navy { background: #000080; }
.s-green { background: #008000; }
.cbw { width: 12px; height: 12px; border: 1px solid #7e7e7e; background: #fff; position: relative; flex: none; }
.cbw.on::after { content: ""; position: absolute; left: 3px; top: 0; width: 4px; height: 8px; border: solid #000; border-width: 0 2px 2px 0; transform: rotate(40deg); }
.gridscroll { flex: 1; background: #f0f0f0; position: relative; display: flex; flex-direction: column; align-items: center; }
.gridscroll .up { margin-top: 8px; }
.gridscroll .down { margin-top: 26px; }
.gthumb { width: 15px; height: 16px; margin-top: 8px; border: 1px solid #a8a8a8; border-radius: 2px; background: repeating-linear-gradient(#eee 0 1px, #777 1px 2px) center / 9px 7px no-repeat, #e8e8e8; flex: none; }
.up { width: 0; height: 0; border: 4px solid transparent; border-top: 0; border-bottom: 4px solid #444; flex: none; }
.down { width: 0; height: 0; border: 4px solid transparent; border-bottom: 0; border-top: 4px solid #444; flex: none; }
.left { width: 0; height: 0; border: 4px solid transparent; border-left: 0; border-right: 4px solid #444; flex: none; }
.right { width: 0; height: 0; border: 4px solid transparent; border-right: 0; border-left: 4px solid #444; flex: none; }

.combo { position: relative; margin: 8px 0 0 6px; width: 247px; height: 20px; line-height: 20px; padding-left: 3px; border: 1px solid #7a7a7a; border-radius: 3px; background: linear-gradient(#f4f4f4, #dedede 55%, #cecece); }
.combo + .combo { margin-top: 7px; }
.cfg { margin: 36px 0 0; height: 16px; background: #cfcfcf; font-size: 11.5px; letter-spacing: 0; padding-left: 3px; line-height: 18px; color: #101010; }

.action { display: flex; align-items: center; gap: 3px; margin: 4px 0 0 57px; width: 146px; height: 24px; padding: 0 0 0 2px; border: 1px solid #7a7a7a; border-radius: 3px; background: linear-gradient(#f8f8f8, #e2e2e2 55%, #cfcfcf); font: inherit; color: inherit; letter-spacing: -.45px; white-space: nowrap; }
.action svg { flex: none; }

.cap { height: 17px; display: flex; align-items: center; padding-left: 3px; border-bottom: 1px solid #c9c5ae; }
.capi { width: 13px; height: 13px; margin: 0 5px 0 5px; fill: none; stroke: #808000; stroke-width: 2; flex: none; }

.siderail { width: 12px; flex: none; background: #353430; padding: 3px 2px 0; position: relative; }
.railthumb { height: 756px; background: #1c1c1a; border-radius: 3px; box-shadow: 0 60px 0 #9a9a96; }

.strip { width: 26px; flex: none; background: #f0f0f0; display: flex; flex-direction: column; align-items: center; }
.stripcollapse { width: 0; height: 0; margin: 4px 0 5px -4px; border: 7px solid transparent; border-left: 0; border-right: 8px solid #000; flex: none; }
.stripsep { width: 22px; height: 1px; background: #b4b4b4; flex: none; }
.si { width: 18px; height: 18px; margin: 4px 0 0 -2px; flex: none; }
.stripsep + .si { margin-top: 5px; }
.sisel { width: 24px; height: 20px; margin-top: 1px; border: 1px solid #8a8a8a; border-radius: 3px; background: linear-gradient(#f8f8f8, #d6d6d6); display: flex; align-items: center; justify-content: center; flex: none; }

.center { width: 1268px; flex: none; border-left: 2px solid #a8a8a8; display: flex; flex-direction: column; border-top: 1px solid #888; }
.viewrow { display: flex; height: 547px; flex: none; }
.canvas { display: block; background: #000; }
.vscroll { width: 17px; background: #f0f0f0; display: flex; flex-direction: column; align-items: center; border-right: 1px solid #d0d0d0; }
.vscroll .up { margin-top: 8px; }
.vthumb { width: 15px; height: 422px; margin-top: 91px; border: 1px solid #bdbdbd; border-radius: 2px; background: linear-gradient(90deg, #e8e8e8, #f6f6f6 30%, #c8c8c8); display: flex; align-items: center; justify-content: center; flex: none; }
.vscroll .down { margin-top: 5px; }
.grip { width: 8px; height: 7px; background: repeating-linear-gradient(#555 0 1px, #eee 1px 2px); }
.grip.v { width: 7px; height: 8px; background: repeating-linear-gradient(90deg, #555 0 1px, #eee 1px 2px); }
.hscroll { height: 16px; margin-bottom: 7px; background: #f0f0f0; display: flex; align-items: center; flex: none; padding-left: 7px; }
.hthumb { width: 1043px; height: 15px; margin-left: 142px; border: 1px solid #bdbdbd; border-radius: 2px; background: linear-gradient(#e8e8e8, #f6f6f6 30%, #c8c8c8); display: flex; align-items: center; justify-content: center; flex: none; }
.hscroll .right { margin-left: 42px; }
.sectitle { margin: 0; height: 16px; flex: none; background: #cdcdcd; font-size: 11.5px; letter-spacing: 0; line-height: 18px; padding-left: 1px; color: #101025; }
.minitb { height: 22px; flex: none; padding-left: 0; display: flex; align-items: center; border-bottom: 1px solid #9a9a9a; }
.minitb .tb:first-child { margin-left: -2px; }
.chart { display: block; background: #000; flex: none; }

.rightm { flex: 1; position: relative; }
.help { position: absolute; left: 9px; top: -18px; width: 15px; height: 15px; border-radius: 50%; background: radial-gradient(circle at 40% 30%, #7ab0f0, #1050c0); color: #fff; font-weight: 700; font-size: 12px; letter-spacing: 0; line-height: 15px; text-align: center; }

/* diagram */
.canvas text { font-family: "Liberation Sans", sans-serif; font-size: 14px; letter-spacing: 0; text-anchor: middle; }
.canvas path, .canvas polyline, .canvas rect, .canvas circle { shape-rendering: crispEdges; fill: none; }
.lbl { fill: #8292cc; }
.dim { fill: #14c890; }
.canvas .sm { font-size: 13px; fill: #8292cc; }
.axis { stroke: #7fe27f; stroke-width: 1; stroke-dasharray: 8 7; }
.axis2 { stroke: #7fe27f; stroke-width: 1; stroke-dasharray: 8 6 2 6; }
.barg { stroke: #80e080; stroke-width: 2; }
.teal { stroke: #14c48c; stroke-width: 1; }
.teal2 { stroke: #14c48c; stroke-width: 2; }
.canvas .tealbox { stroke: #14c48c; stroke-width: 2; }
.bub { stroke: #8a9ad2; stroke-width: 2; }
.rebar { stroke: #7878f4; stroke-width: 2; }
.redbar { stroke: #ff3800; stroke-width: 2; }
.thin { stroke: #8a9ad2; stroke-width: 1; }
.greenl { stroke: #80e080; stroke-width: 2; }
.beamaxis { stroke: #7fe27f; stroke-width: 1; stroke-dasharray: 8 6 2 6; }
.stirrups { stroke: #70b0ff; stroke-width: 2; }
.curve { stroke: #8a9ad2; stroke-width: 2; }
.canvas .tip { fill: #ffffe0; stroke: #8a9ad2; stroke-width: 2; }
.canvas .tipt { fill: #8292cc; }
.pill { stroke: #8a9ad2; stroke-width: 2; }

/* chart */
.chart text { font-family: "Liberation Sans", sans-serif; font-size: 9px; letter-spacing: 0; fill: #f4f4f4; }
.chart .ct { text-anchor: middle; }
.ticks text { text-anchor: end; }
.chart path, .chart polyline { shape-rendering: crispEdges; fill: none; vector-effect: non-scaling-stroke; }
.grid-d { stroke: #e8e8e8; stroke-dasharray: 4 3; }
.grid-s { stroke: #f0f0f0; }
.c-tot { stroke: #80e080; stroke-width: 1; }
.c-tot.dashed { stroke-dasharray: 5 3; }
.c-eff { stroke: #80e080; stroke-width: 2; }
.c-nec { stroke: #ff0000; stroke-width: 2; }
.l-red { stroke: #ff0000; stroke-width: 2; }
.l-green { stroke: #80e080; stroke-width: 2; }
.l-dash { stroke: #80e080; stroke-width: 1; stroke-dasharray: 8 3 4 3; }
.chart .lg { fill: #80e080; letter-spacing: .35px; }
.chart .lg.red { fill: #ff0000; }
```
